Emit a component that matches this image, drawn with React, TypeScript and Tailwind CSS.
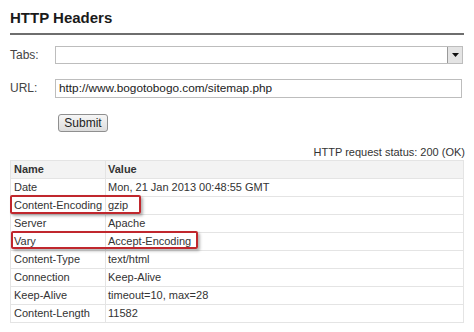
import React from 'react'

const headers: [string, string][] = [
    ['Date', 'Mon, 21 Jan 2013 00:48:55 GMT'],
    ['Content-Encoding', 'gzip'],
    ['Server', 'Apache'],
    ['Vary', 'Accept-Encoding'],
    ['Content-Type', 'text/html'],
    ['Connection', 'Keep-Alive'],
    ['Keep-Alive', 'timeout=10, max=28'],
    ['Content-Length', '11582'],
]

export default function App() {
    return (
        <div className="h-[332px] w-[474px] overflow-hidden bg-white px-[10px] pt-[8px] font-['Liberation_Sans',Arial,sans-serif] text-[#333]">
            <h1 className="text-[15px] font-bold leading-[20px] text-[#1a1a1a]">HTTP Headers</h1>
            <div className="mt-[5px] h-[2px] w-[454px] bg-[#6e6e6e]" />

            <div className="mt-[11px] flex h-[18px] w-[453px] items-center">
                <label className="w-[45px] text-[12px] leading-[18px] text-[#444]">Tabs:</label>
                <div className="flex h-[18px] flex-1 items-stretch border border-[#bdbdbd] bg-white">
                    <div className="flex-1" />
                    <div className="flex w-[15px] items-center justify-center border-l border-[#9a9a9a] bg-[#e4e4e4]">
                        <svg width="7" height="4" viewBox="0 0 7 4">
                            <path d="M0 0h7L3.5 4z" fill="#111" />
                        </svg>
                    </div>
                </div>
            </div>

            <div className="mt-[15px] flex h-[19px] w-[452px] items-center">
                <label className="w-[45px] text-[12px] leading-[19px] text-[#444]">URL:</label>
                <div className="flex h-[19px] flex-1 items-center border border-[#bdbdbd] bg-white pl-[3px] text-[11.8px] text-[#222]">
                    http://www.bogotobogo.com/sitemap.php
                </div>
            </div>

            <button
                type="button"
                className="ml-[48px] mt-[16px] flex h-[18px] w-[50px] items-center justify-center rounded-[3px] border border-[#8f8f8f] bg-gradient-to-b from-[#f6f6f6] to-[#dcdcdc] text-[12px] text-[#222]"
            >
                Submit
            </button>

            <p className="mt-[12px] h-[16px] w-[455px] text-right text-[11px] leading-[16px] text-[#333]">
                HTTP request status: 200 (OK)
            </p>

            <div className="relative w-[454px]">
                <table className="w-full border-collapse text-[11px] leading-[17px] text-[#333]">
                    <thead>
                        <tr className="h-[18px] bg-[#f3f3f3]">
                            <th className="w-[95px] border border-[#e4e4e4] pl-[3px] text-left font-bold">Name</th>
                            <th className="border border-[#e4e4e4] pl-[2px] text-left font-bold">Value</th>
                        </tr>
                    </thead>
                    <tbody>
                        {headers.map(([name, value]) => (
                            <tr key={name} className="h-[18px]">
                                <td className="border border-[#e4e4e4] pl-[3px]">{name}</td>
                                <td className="border border-[#e4e4e4] pl-[2px]">{value}</td>
                            </tr>
                        ))}
                    </tbody>
                </table>
                <div className="absolute left-0 top-[35px] h-[19px] w-[131px] rounded-[2px] border-2 border-[#c0272d] shadow-[2px_2px_3px_rgba(0,0,0,0.3)]" />
                <div className="absolute left-[1px] top-[71px] h-[18px] w-[187px] rounded-[2px] border-2 border-[#c0272d] shadow-[2px_2px_3px_rgba(0,0,0,0.3)]" />
            </div>
        </div>
    )
}
